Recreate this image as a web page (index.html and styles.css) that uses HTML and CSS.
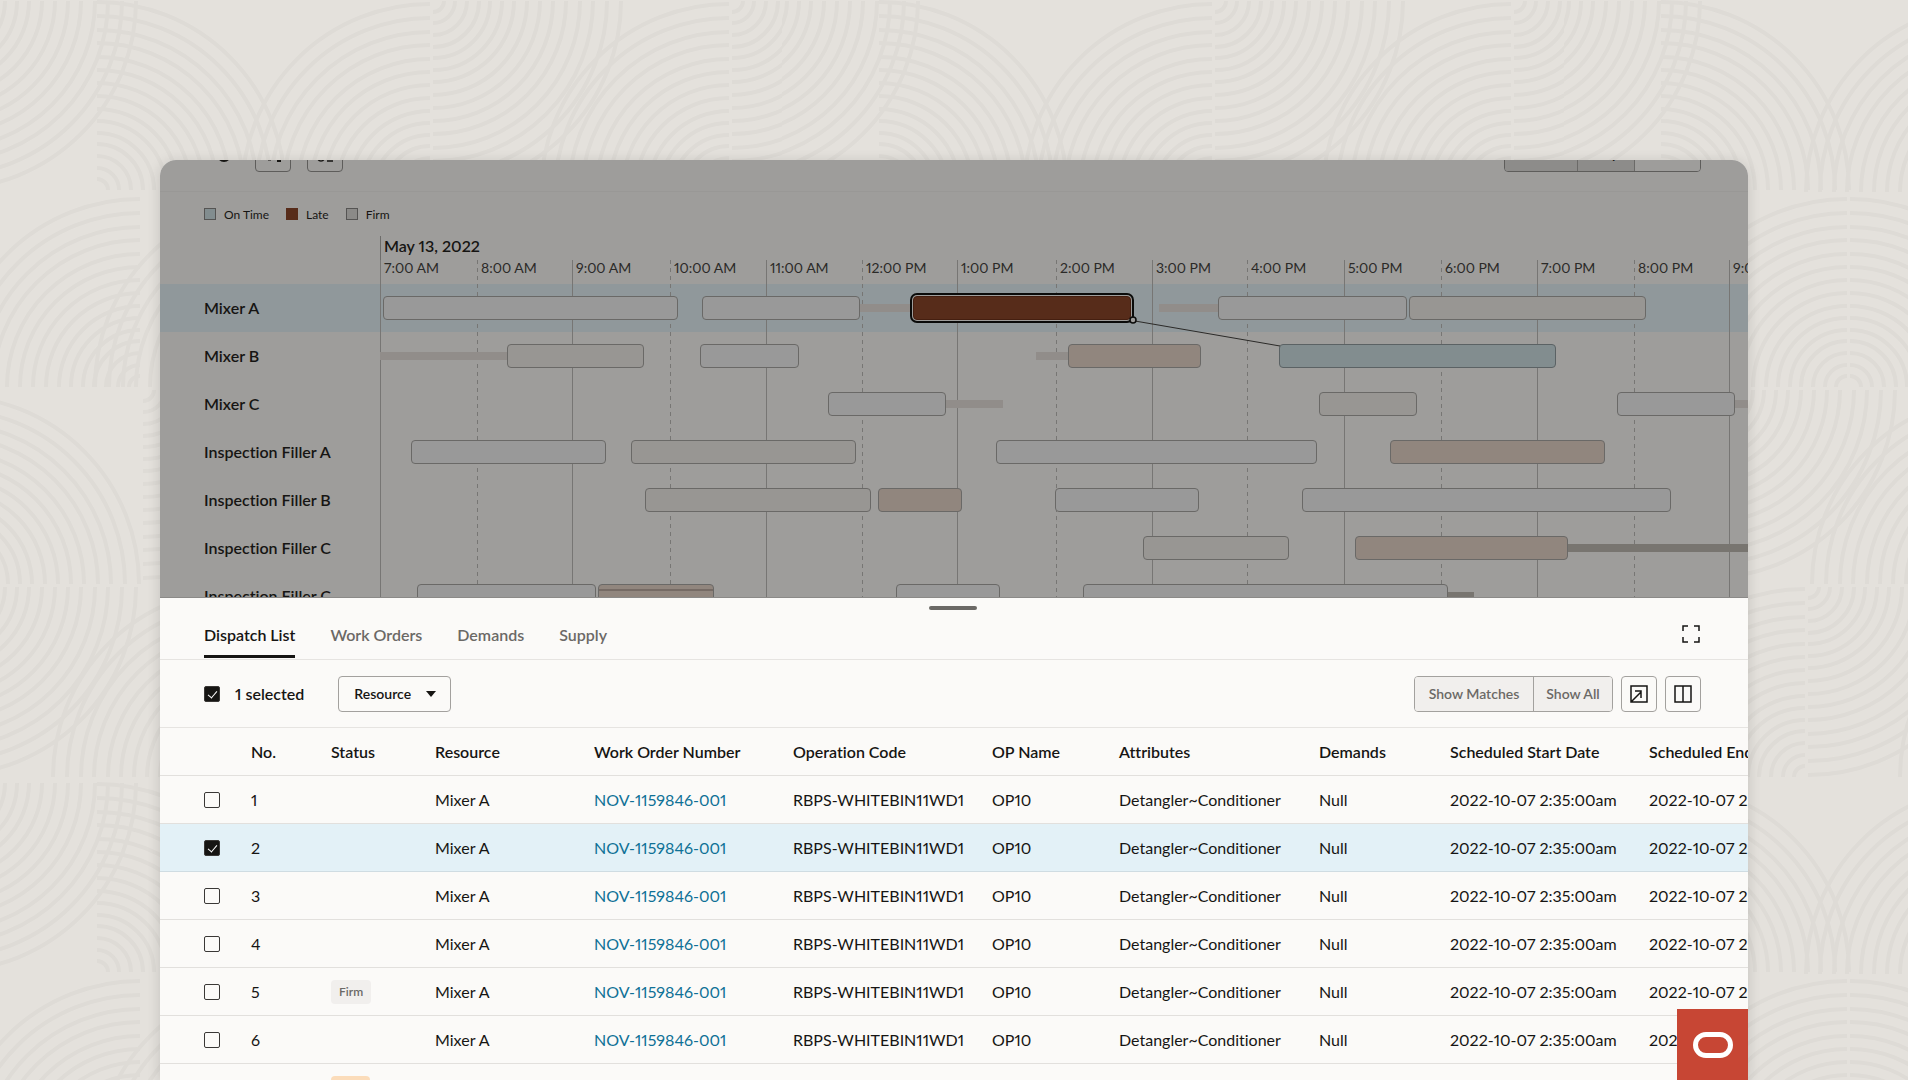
FILE: index.html
```html
<!DOCTYPE html>
<html lang="en">
<head>
    <meta charset="UTF-8">
    <meta name="viewport" content="width=device-width, initial-scale=1.0">
    <title>Production Schedule</title>
    <link rel="stylesheet" href="styles.css">
</head>
<body>

<!-- background pattern -->
<svg class="backdrop" aria-hidden="true">
    <defs>
        <g id="arc" fill="none" stroke="#dedbd6" stroke-width="4">
            <path d="M11 0A11 11 0 0 1 0 11M22 0A22 22 0 0 1 0 22M34 0A34 34 0 0 1 0 34M46 0A46 46 0 0 1 0 46M57 0A57 57 0 0 1 0 57M69 0A69 69 0 0 1 0 69M81 0A81 81 0 0 1 0 81M94 0A94 94 0 0 1 0 94M107 0A107 107 0 0 1 0 107M120 0A120 120 0 0 1 0 120M133 0A133 133 0 0 1 0 133M147 0A147 147 0 0 1 0 147M160 0A160 160 0 0 1 0 160M174 0A174 174 0 0 1 0 174M188 0A188 188 0 0 1 0 188"/>
        </g>
        <pattern id="waves" width="782" height="782" patternUnits="userSpaceOnUse">
            <use href="#arc" transform="translate(-52 1)"/>
            <use href="#arc" transform="translate(97 190) scale(1 -1)"/>
            <use href="#arc" transform="translate(430 192) scale(-1 -1)"/>
            <use href="#arc" transform="translate(433 1)"/>
            <use href="#arc" transform="translate(729 192) scale(-1 -1)"/>
            <use href="#arc" transform="translate(732 1)"/>
            <use href="#arc" transform="translate(140 387) scale(-1 -1)"/>
            <use href="#arc" transform="translate(283 387) scale(-1 -1)"/>
            <use href="#arc" transform="translate(286 387) scale(1 -1)"/>
            <use href="#arc" transform="translate(-49 584) scale(1 -1)"/>
            <use href="#arc" transform="translate(143 390)"/>
            <use href="#arc" transform="translate(436 584) scale(-1 -1)"/>
            <use href="#arc" transform="translate(-52 587)"/>
            <use href="#arc" transform="translate(241 777) scale(-1 -1)"/>
            <use href="#arc" transform="translate(244 587)"/>
            <use href="#arc" transform="translate(524 777) scale(-1 -1)"/>
        </pattern>
    </defs>
    <rect width="100%" height="100%" fill="url(#waves)"/>
</svg>

<main class="window">

    <section class="schedule">
        <div class="schedule-bar">
            <svg class="refresh" width="20" height="20" viewBox="0 0 20 20"><circle cx="10" cy="11" r="6" fill="none" stroke="#161513" stroke-width="2"/></svg>
            <button class="icon-btn dim" aria-label="Filter">
                <svg width="18" height="18" viewBox="0 0 18 18"><path d="M4 3v12h3" fill="none" stroke="#161513" stroke-width="1"/><path d="M13 12h4v5h-4z" fill="#161513"/></svg>
            </button>
            <button class="icon-btn dim" aria-label="Levels">
                <svg width="18" height="18" viewBox="0 0 18 18" fill="none" stroke="#161513" stroke-width="1.5"><circle cx="5" cy="13" r="3"/><path d="M11 16h6M2 4h15"/></svg>
            </button>
            <div class="segmented dim">
                <button class="hours">Hours</button>
                <button class="day">Day</button>
                <button class="week">Week</button>
            </div>
        </div>

        <div class="legend">
            <span class="legend-item"><i class="swatch on-time"></i>On Time</span>
            <span class="legend-item"><i class="swatch late"></i>Late</span>
            <span class="legend-item"><i class="swatch firm"></i>Firm</span>
        </div>

        <div class="gantt">
            <div class="axis">
                <div class="axis-date">May 13, 2022</div>
                <div class="axis-hours">
                    <div class="hour first" style="width:97px">7:00 AM</div>
                    <div class="hour" style="width:95px">8:00 AM</div>
                    <div class="hour" style="width:98px">9:00 AM</div>
                    <div class="hour" style="width:96px">10:00 AM</div>
                    <div class="hour" style="width:96px">11:00 AM</div>
                    <div class="hour" style="width:95px">12:00 PM</div>
                    <div class="hour" style="width:99px">1:00 PM</div>
                    <div class="hour" style="width:96px">2:00 PM</div>
                    <div class="hour" style="width:95px">3:00 PM</div>
                    <div class="hour" style="width:97px">4:00 PM</div>
                    <div class="hour" style="width:97px">5:00 PM</div>
                    <div class="hour" style="width:96px">6:00 PM</div>
                    <div class="hour" style="width:97px">7:00 PM</div>
                    <div class="hour" style="width:95px">8:00 PM</div>
                    <div class="hour" style="width:96px">9:00 PM</div>
                </div>
            </div>

            <div class="lane active">
                <div class="lane-name">Mixer A</div>
                <div class="track">
                    <div class="buffer" style="left:479px;width:52px"></div>
                    <div class="buffer" style="left:779px;width:60px"></div>
                    <div class="bar" style="left:3px;width:295px"></div>
                    <div class="bar" style="left:322px;width:158px"></div>
                    <div class="bar selected" style="left:533px;width:218px"></div>
                    <div class="bar" style="left:838px;width:189px"></div>
                    <div class="bar warm" style="left:1029px;width:237px"></div>
                    <svg class="link-line" width="160" height="40" viewBox="0 0 160 40" fill="none">
                        <path d="M6 7L151 32" stroke="#2b2a28"/>
                        <circle cx="4" cy="6" r="3" fill="#9e9d9b" stroke="#0b0b0a" stroke-width="1.5"/>
                    </svg>
                </div>
            </div>
            <div class="lane">
                <div class="lane-name">Mixer B</div>
                <div class="track">
                    <div class="buffer" style="left:0;width:128px"></div>
                    <div class="buffer" style="left:656px;width:33px"></div>
                    <div class="bar warm" style="left:127px;width:137px"></div>
                    <div class="bar" style="left:320px;width:99px"></div>
                    <div class="bar brown" style="left:688px;width:133px"></div>
                    <div class="bar teal" style="left:899px;width:277px"></div>
                </div>
            </div>
            <div class="lane">
                <div class="lane-name">Mixer C</div>
                <div class="track">
                    <div class="buffer" style="left:565px;width:58px"></div>
                    <div class="buffer" style="left:1354px;width:60px"></div>
                    <div class="bar" style="left:448px;width:118px"></div>
                    <div class="bar warm" style="left:939px;width:98px"></div>
                    <div class="bar" style="left:1237px;width:118px"></div>
                </div>
            </div>
            <div class="lane">
                <div class="lane-name">Inspection Filler A</div>
                <div class="track">
                    <div class="bar" style="left:31px;width:195px"></div>
                    <div class="bar warm" style="left:251px;width:225px"></div>
                    <div class="bar" style="left:616px;width:321px"></div>
                    <div class="bar brown" style="left:1010px;width:215px"></div>
                </div>
            </div>
            <div class="lane">
                <div class="lane-name">Inspection Filler B</div>
                <div class="track">
                    <div class="bar warm" style="left:265px;width:226px"></div>
                    <div class="bar brown" style="left:498px;width:84px"></div>
                    <div class="bar" style="left:675px;width:144px"></div>
                    <div class="bar" style="left:922px;width:369px"></div>
                </div>
            </div>
            <div class="lane">
                <div class="lane-name">Inspection Filler C</div>
                <div class="track">
                    <div class="buffer dark" style="left:1187px;width:240px"></div>
                    <div class="bar warm" style="left:763px;width:146px"></div>
                    <div class="bar brown" style="left:975px;width:213px"></div>
                </div>
            </div>
            <div class="lane">
                <div class="lane-name">Inspection Filler C</div>
                <div class="track">
                    <div class="buffer dark" style="left:1067px;width:27px"></div>
                    <div class="bar" style="left:37px;width:179px"></div>
                    <div class="bar brown split" style="left:218px;width:116px"></div>
                    <div class="bar" style="left:516px;width:104px"></div>
                    <div class="bar" style="left:703px;width:365px"></div>
                </div>
            </div>
        </div>
    </section>

    <section class="drawer">
        <div class="handle"></div>
        <nav class="tabs">
            <a class="tab current" href="#dispatch">Dispatch List</a>
            <a class="tab" href="#orders">Work Orders</a>
            <a class="tab" href="#demands">Demands</a>
            <a class="tab" href="#supply">Supply</a>
            <button class="expand" aria-label="Expand">
                <svg width="18" height="18" viewBox="0 0 18 18" fill="none" stroke="#161513" stroke-width="1.5"><path d="M1 6V1h5M12 1h5v5M17 12v5h-5M6 17H1v-5"/></svg>
            </button>
        </nav>

        <div class="toolbar">
            <label class="selected-count"><input type="checkbox" class="check" checked>1 selected</label>
            <div class="dropdown">
                <select aria-label="Group by">
                    <option>Resource</option>
                </select>
                <svg width="10" height="6" viewBox="0 0 10 6"><path d="M0 0h10L5 6z" fill="#161513"/></svg>
            </div>
            <div class="toolbar-right">
                <div class="segmented">
                    <button class="matches">Show Matches</button>
                    <button class="all">Show All</button>
                </div>
                <button class="icon-btn" aria-label="Export">
                    <svg width="18" height="18" viewBox="0 0 18 18" fill="none" stroke="#161513" stroke-width="1.5"><path d="M1 1h16v16H1zM1 17L11 7M5 6h6v7"/></svg>
                </button>
                <button class="icon-btn" aria-label="Columns">
                    <svg width="18" height="18" viewBox="0 0 18 18" fill="none" stroke="#161513" stroke-width="1.5"><path d="M1 1h16v16H1zM9 1v16"/></svg>
                </button>
            </div>
        </div>

        <table class="orders">
            <colgroup>
                <col class="c-check"><col class="c-no"><col class="c-status"><col class="c-resource"><col class="c-order"><col class="c-code"><col class="c-op"><col class="c-attr"><col class="c-demand"><col class="c-date"><col class="c-date">
            </colgroup>
            <thead>
                <tr>
                    <th></th>
                    <th>No.</th>
                    <th>Status</th>
                    <th>Resource</th>
                    <th>Work Order Number</th>
                    <th>Operation Code</th>
                    <th>OP Name</th>
                    <th>Attributes</th>
                    <th>Demands</th>
                    <th>Scheduled Start Date</th>
                    <th>Scheduled End Date</th>
                </tr>
            </thead>
            <tbody>
                <tr>
                    <td><input type="checkbox" class="check" aria-label="Select row 1"></td>
                    <td>1</td>
                    <td></td>
                    <td>Mixer A</td>
                    <td><a href="#wo">NOV-1159846-001</a></td>
                    <td>RBPS-WHITEBIN11WD1</td>
                    <td>OP10</td>
                    <td>Detangler~Conditioner</td>
                    <td>Null</td>
                    <td>2022-10-07 2:35:00am</td>
                    <td>2022-10-07 2:35:00am</td>
                </tr>
                <tr class="picked">
                    <td><input type="checkbox" class="check" aria-label="Select row 2" checked></td>
                    <td>2</td>
                    <td></td>
                    <td>Mixer A</td>
                    <td><a href="#wo">NOV-1159846-001</a></td>
                    <td>RBPS-WHITEBIN11WD1</td>
                    <td>OP10</td>
                    <td>Detangler~Conditioner</td>
                    <td>Null</td>
                    <td>2022-10-07 2:35:00am</td>
                    <td>2022-10-07 2:35:00am</td>
                </tr>
                <tr>
                    <td><input type="checkbox" class="check" aria-label="Select row 3"></td>
                    <td>3</td>
                    <td></td>
                    <td>Mixer A</td>
                    <td><a href="#wo">NOV-1159846-001</a></td>
                    <td>RBPS-WHITEBIN11WD1</td>
                    <td>OP10</td>
                    <td>Detangler~Conditioner</td>
                    <td>Null</td>
                    <td>2022-10-07 2:35:00am</td>
                    <td>2022-10-07 2:35:00am</td>
                </tr>
                <tr>
                    <td><input type="checkbox" class="check" aria-label="Select row 4"></td>
                    <td>4</td>
                    <td></td>
                    <td>Mixer A</td>
                    <td><a href="#wo">NOV-1159846-001</a></td>
                    <td>RBPS-WHITEBIN11WD1</td>
                    <td>OP10</td>
                    <td>Detangler~Conditioner</td>
                    <td>Null</td>
                    <td>2022-10-07 2:35:00am</td>
                    <td>2022-10-07 2:35:00am</td>
                </tr>
                <tr>
                    <td><input type="checkbox" class="check" aria-label="Select row 5"></td>
                    <td>5</td>
                    <td><span class="badge">Firm</span></td>
                    <td>Mixer A</td>
                    <td><a href="#wo">NOV-1159846-001</a></td>
                    <td>RBPS-WHITEBIN11WD1</td>
                    <td>OP10</td>
                    <td>Detangler~Conditioner</td>
                    <td>Null</td>
                    <td>2022-10-07 2:35:00am</td>
                    <td>2022-10-07 2:35:00am</td>
                </tr>
                <tr>
                    <td><input type="checkbox" class="check" aria-label="Select row 6"></td>
                    <td>6</td>
                    <td></td>
                    <td>Mixer A</td>
                    <td><a href="#wo">NOV-1159846-001</a></td>
                    <td>RBPS-WHITEBIN11WD1</td>
                    <td>OP10</td>
                    <td>Detangler~Conditioner</td>
                    <td>Null</td>
                    <td>2022-10-07 2:35:00am</td>
                    <td>2022-10-07 2:35:00am</td>
                </tr>
                <tr>
                    <td><input type="checkbox" class="check" aria-label="Select row 7"></td>
                    <td>7</td>
                    <td><span class="badge badge-late">Late</span></td>
                    <td>Mixer A</td>
                    <td><a href="#wo">NOV-1159846-001</a></td>
                    <td>RBPS-WHITEBIN11WD1</td>
                    <td>OP10</td>
                    <td>Detangler~Conditioner</td>
                    <td>Null</td>
                    <td>2022-10-07 2:35:00am</td>
                    <td>2022-10-07 2:35:00am</td>
                </tr>
            </tbody>
        </table>
    </section>

    <div class="brand">
        <svg width="40" height="26" viewBox="0 0 40 26"><rect x="2.500" y="2.500" width="35" height="21" rx="10.500" fill="none" stroke="#fff" stroke-width="5"/></svg>
    </div>
</main>

</body>
</html>
```
FILE: styles.css
```css
* {
    box-sizing: border-box;
}
body {
    margin: 0;
    height: 100vh;
    overflow: hidden;
    padding: 160px 160px 0;
    background-color: #e4e1dc;
    color: #161513;
    font-family: Lato, "Noto Sans", sans-serif;
    font-size: 16px;
    font-variant-ligatures: none;
    font-variant-numeric: proportional-nums;
}
button, select, input {
    margin: 0;
    font-family: inherit;
    color: inherit;
}
.backdrop {
    position: absolute;
    left: 0;
    top: 0;
    width: 100%;
    height: 100%;
}
.window {
    position: relative;
    height: 100%;
    overflow: hidden;
    border-radius: 16px 16px 0 0;
    background-color: #fbfaf8;
    box-shadow: 0 2px 14px rgba(0, 0, 0, 0.14);
}

/* schedule */
.schedule {
    height: 438px;
    overflow: hidden;
    background-color: #9e9d9b;
    border-bottom: 1px solid #8b8a88;
}
.schedule-bar {
    display: flex;
    align-items: center;
    gap: 16px;
    height: 76px;
    margin-top: -44px;
    padding: 0 47px 0 54px;
    border-bottom: 1px solid #999896;
}
.refresh {
    margin-right: 5px;
}
.icon-btn {
    display: flex;
    align-items: center;
    justify-content: center;
    width: 36px;
    height: 36px;
    padding: 0;
    background: none;
    border: 1px solid #a3a19e;
    border-radius: 4px;
}
.icon-btn.dim {
    border-color: #5e5d5b;
}
.segmented {
    display: flex;
    height: 36px;
    border: 1px solid #a3a19e;
    border-radius: 4px;
    overflow: hidden;
}
.segmented button {
    padding: 0 12px;
    border: 0;
    border-right: 1px solid #a3a19e;
    background-color: #f1efed;
    color: #6b6966;
    font-size: 14px;
    font-weight: 600;
}
.segmented button:last-child {
    border-right: 0;
}
.segmented.dim {
    margin-left: auto;
    border-color: #5e5d5b;
}
.segmented.dim button {
    padding: 0;
    border-color: #6b6a68;
    background-color: #8d8c8a;
    color: #161513;
}
.segmented.dim .hours {
    width: 73px;
}
.segmented.dim .day {
    width: 57px;
}
.segmented.dim .week {
    width: 65px;
    background-color: #9e9d9b;
}
.legend {
    display: flex;
    align-items: center;
    gap: 17px;
    height: 44px;
    padding-left: 44px;
    font-size: 12px;
}
.legend-item {
    display: flex;
    align-items: center;
    gap: 8px;
}
.swatch {
    width: 12px;
    height: 12px;
    border: 1px solid #555453;
}
.swatch.on-time {
    background-color: #828d8f;
}
.swatch.late {
    background-color: #572c1a;
    border-color: #572c1a;
}
.swatch.firm {
    background-color: #8b8a88;
}

/* gantt */
.axis {
    position: relative;
    height: 48px;
    margin-left: 220px;
    border-left: 1px solid #6d6c6a;
}
.axis-date {
    padding-left: 3px;
    height: 24px;
    line-height: 20px;
    font-weight: 600;
}
.axis-hours {
    display: flex;
    width: 0;
    margin-left: -1px;
}
.hour {
    position: relative;
    flex: none;
    height: 24px;
    padding-left: 4px;
    line-height: 16px;
    font-size: 14px;
    color: #2b2a28;
}
/* grid lines run from the hour label down through every lane */
.hour::before {
    content: "";
    position: absolute;
    left: 0;
    top: 0;
    width: 1px;
    height: 400px;
    background-color: #777674;
}
.hour:nth-child(even)::before {
    background: repeating-linear-gradient(#777674 0 4px, transparent 4px 8px);
}
.lane {
    display: flex;
    height: 48px;
}
.lane.active {
    background-color: #90989b;
}
.lane-name {
    flex: none;
    width: 220px;
    padding-left: 44px;
    line-height: 48px;
    font-weight: 600;
}
.track {
    position: relative;
    flex: 1;
}
.bar {
    position: absolute;
    top: 12px;
    height: 24px;
    border: 1px solid #6a6967;
    border-radius: 4px;
    background-color: #999999;
}
.bar.warm {
    background-color: #989693;
}
.bar.brown {
    background-color: #91867e;
}
.bar.teal {
    background-color: #828d8f;
    border-color: #5b6264;
}
.bar.selected {
    background-color: #572c1a;
    border-color: #451f10;
    box-shadow: 0 0 0 1px #9e9d9b, 0 0 0 3px #0b0b0a;
}
.bar.split::before {
    content: "";
    display: block;
    margin-top: 4px;
    height: 2px;
    background-color: #766b65;
}
.buffer {
    position: absolute;
    top: 20px;
    height: 8px;
    background-color: #918d8a;
}
.buffer.dark {
    background-color: #787570;
}
.link-line {
    position: absolute;
    left: 749px;
    top: 30px;
    z-index: 1;
}

/* drawer */
.drawer {
    position: relative;
    background-color: #fbfaf8;
}
.handle {
    position: absolute;
    left: 50%;
    top: 8px;
    width: 48px;
    height: 4px;
    margin-left: -25px;
    border-radius: 2px;
    background-color: #6b6966;
}
.tabs {
    display: flex;
    align-items: flex-end;
    gap: 35px;
    height: 62px;
    padding: 0 48px 1px 44px;
    border-bottom: 1px solid #e6e4e1;
}
.tab {
    height: 35px;
    line-height: 24px;
    color: #6b6966;
    font-weight: 600;
    text-decoration: none;
}
.tab.current {
    color: #161513;
    border-bottom: 3px solid #161513;
}
.expand {
    display: flex;
    margin: 0 0 15px auto;
    padding: 0;
    border: 0;
    background: none;
}
.toolbar {
    display: flex;
    align-items: center;
    height: 68px;
    padding: 0 47px 0 44px;
    border-bottom: 1px solid #e6e4e1;
}
.selected-count {
    display: flex;
    align-items: center;
    gap: 15px;
    font-weight: 600;
}
.check {
    display: block;
    appearance: none;
    width: 16px;
    height: 16px;
    border: 1px solid #3a3836;
    border-radius: 2px;
}
.check:checked {
    background-color: #161513;
}
.check:checked::before {
    content: "";
    display: block;
    width: 4px;
    height: 8px;
    margin: 2px 0 0 5px;
    border: solid #fff;
    border-width: 0 1px 1px 0;
    transform: rotate(40deg);
}
.dropdown {
    position: relative;
    margin-left: 34px;
}
.dropdown select {
    appearance: none;
    width: 113px;
    height: 36px;
    padding: 0 15px;
    border: 1px solid #a3a19e;
    border-radius: 4px;
    background: none;
    font-size: 14px;
    font-weight: 600;
}
.dropdown svg {
    position: absolute;
    right: 15px;
    top: 15px;
    pointer-events: none;
}
.toolbar-right {
    display: flex;
    gap: 8px;
    margin-left: auto;
}
.matches {
    width: 119px;
}
.all {
    width: 78px;
}
.orders {
    width: 100%;
    table-layout: fixed;
    border-spacing: 0;
}
.c-check { width: 91px; }
.c-no { width: 80px; }
.c-status { width: 104px; }
.c-resource { width: 159px; }
.c-order { width: 199px; }
.c-code { width: 199px; }
.c-op { width: 127px; }
.c-attr { width: 200px; }
.c-demand { width: 131px; }
.c-date { width: 199px; }
.orders th,
.orders td {
    height: 48px;
    padding: 0;
    border-bottom: 1px solid #e2e0dd;
    text-align: left;
    white-space: nowrap;
}
.orders th {
    font-weight: 600;
}
.orders th:first-child,
.orders td:first-child {
    padding-left: 44px;
}
.orders a {
    color: #0f7196;
    text-decoration: none;
}
.picked td {
    background-color: #e3f1f7;
    border-color: #cfdce2;
}
.badge {
    display: inline-block;
    padding: 0 8px;
    line-height: 24px;
    border-radius: 4px;
    background-color: #f1efed;
    color: #6b6966;
    font-size: 12px;
    font-weight: 600;
}
.badge-late {
    background-color: #fbdcba;
}
.brand {
    position: absolute;
    right: 0;
    bottom: 0;
    display: flex;
    align-items: center;
    justify-content: center;
    width: 71px;
    height: 71px;
    background-color: #c74634;
}
```
